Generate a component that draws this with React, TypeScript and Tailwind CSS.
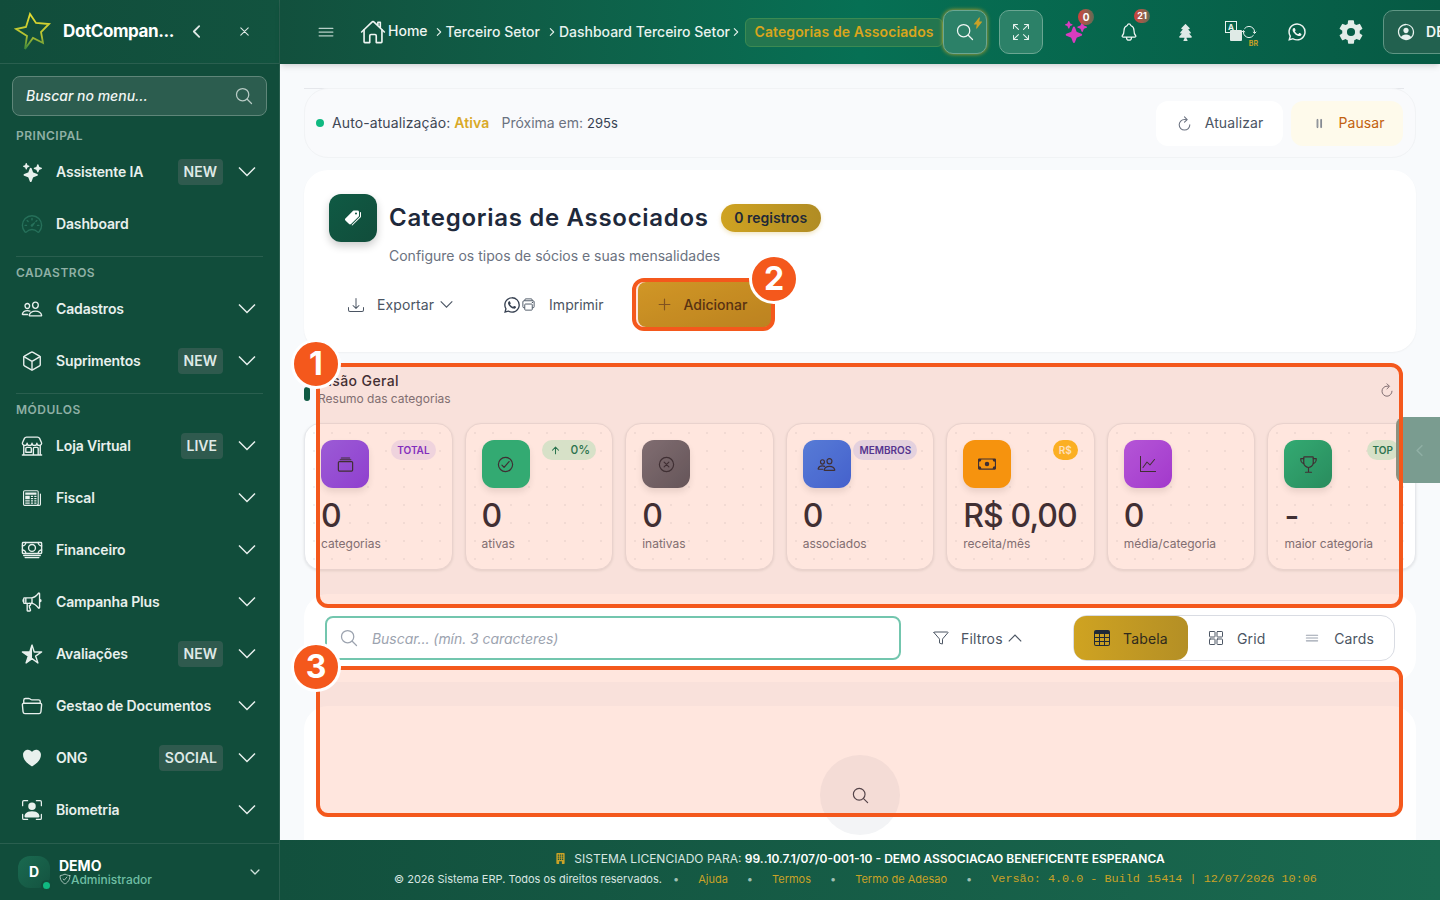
import React from "react";
import {
  IoAddOutline, IoAlbumsOutline, IoArrowUpOutline, IoCashOutline, IoCheckmarkCircleOutline,
  IoChevronBackOutline, IoChevronDownOutline, IoChevronForwardOutline,
  IoCloseCircleOutline, IoCloseOutline, IoCubeOutline, IoFolderOpenOutline,
  IoFunnelOutline, IoGridOutline, IoHeart, IoHomeOutline, IoLogoWhatsapp, IoMegaphoneOutline,
  IoMenuOutline, IoNotificationsOutline, IoPauseOutline, IoPeopleOutline, IoPersonCircleOutline,
  IoPrintOutline, IoRefreshOutline, IoReorderThreeOutline, IoSearchOutline, IoSettingsSharp,
  IoShieldCheckmarkOutline, IoSparkles, IoSpeedometerOutline, IoStarHalf, IoStorefrontOutline,
  IoTrophyOutline, IoFlash, IoPricetags, IoSync,
} from "react-icons/io5";
import { BsBuildingFill, BsCash, BsDownload, BsGraphUp, BsPersonBoundingBox, BsTable, BsNewspaper, BsArrowsFullscreen } from "react-icons/bs";
import { FaTree } from "react-icons/fa";

const font = "font-['Inter',sans-serif]";

function Chev({ w = 18, up = false, cls = "" }: { w?: number; up?: boolean; cls?: string }) {
  const h = w * 0.56;
  return (
    <svg width={w} height={h} viewBox="0 0 18 10" fill="none" stroke="currentColor" strokeWidth={1.5} className={cls}>
      <polyline points={up ? "1,9.5 9,1.5 17,9.5" : "1,0.5 9,8.5 17,0.5"} />
    </svg>
  );
}

type NavProps = { icon: React.ReactNode; label: string; badge?: string };

function NavItem({ icon, label, badge }: NavProps) {
  return (
    <div className="h-[52px] flex items-center pl-[21px] pr-[23px] text-[#e8f0ed]">
      <span className="w-[22px] flex justify-center text-[22px]">{icon}</span>
      <span className="ml-[13px] flex-1 text-sm font-semibold tracking-[-0.15px]">{label}</span>
      {badge && <span className="h-[26px] px-[6px] flex items-center rounded bg-[#2f5a4e] text-sm font-semibold text-[#dfe9e6]">{badge}</span>}
      {label !== "Dashboard" && <Chev cls="ml-[15px]" />}
    </div>
  );
}

function SectionLabel({ text }: { text: string }) {
  return <div className="h-[26px] pt-[8px] px-4 text-xs leading-4 font-semibold tracking-[0.5px] text-[#8fb0a5]">{text}</div>;
}

function Sidebar() {
  return (
    <aside className="w-[280px] h-full shrink-0 flex flex-col bg-[#114d3b] border-r border-[#2a5f4f]">
      <div className="h-16 shrink-0 flex items-center pl-[14px] border-b border-[#2a5f4f] bg-gradient-to-r from-[#114d3b] to-[#12533f]">
        <svg width="38" height="40" viewBox="0 0 38 40" className="shrink-0">
          <defs>
            <linearGradient id="logoStar" x1="0.5" y1="0" x2="0.4" y2="1">
              <stop offset="0" stopColor="#e6dc30" />
              <stop offset="0.6" stopColor="#b6c232" />
              <stop offset="1" stopColor="#3f8a3a" />
            </linearGradient>
          </defs>
          <path d="M16 2l6 9 13 1-8 8 2 11-10-5-8 11 2-13L2 17l10-2z" fill="none" stroke="url(#logoStar)" strokeWidth="1.8" />
        </svg>
        <span className="ml-[11px] w-[111px] whitespace-nowrap text-[17px] font-bold tracking-[-0.4px] text-white">DotCompan...</span>
        <IoChevronBackOutline className="ml-[13px] text-[19px] text-[#dfe9e6]" />
        <IoCloseOutline className="ml-[30px] text-[17px] text-[#dfe9e6]" />
      </div>
      <div className="mx-3 mt-3 h-10 shrink-0 flex items-center justify-between pl-[13px] pr-[12px] rounded-lg bg-[#2c5d4f] border border-[#5f8679]">
        <span className="text-sm italic font-medium text-[#f0f5f3]">Buscar no menu...</span>
        <IoSearchOutline className="text-[20px] text-[#b8cbc5]" />
      </div>
      <nav className="mt-1 flex-1 min-h-0 overflow-hidden">
        <SectionLabel text="PRINCIPAL" />
        <NavItem icon={<IoSparkles className="text-[19px]" />} label="Assistente IA" badge="NEW" />
        <NavItem icon={<IoSpeedometerOutline className="text-[#26705a]" />} label="Dashboard" />
        <div className="mx-4 mt-[6px] h-px bg-[#2a5f4f]" />
        <SectionLabel text="CADASTROS" />
        <NavItem icon={<IoPeopleOutline />} label="Cadastros" />
        <NavItem icon={<IoCubeOutline />} label="Suprimentos" badge="NEW" />
        <div className="mx-4 mt-[6px] h-px bg-[#2a5f4f]" />
        <SectionLabel text="MÓDULOS" />
        <NavItem icon={<IoStorefrontOutline />} label="Loja Virtual" badge="LIVE" />
        <NavItem icon={<BsNewspaper className="text-[18px]" />} label="Fiscal" />
        <NavItem icon={<IoCashOutline />} label="Financeiro" />
        <NavItem icon={<IoMegaphoneOutline />} label="Campanha Plus" />
        <NavItem icon={<IoStarHalf />} label="Avaliações" badge="NEW" />
        <NavItem icon={<IoFolderOpenOutline />} label="Gestao de Documentos" />
        <NavItem icon={<IoHeart />} label="ONG" badge="SOCIAL" />
        <NavItem icon={<BsPersonBoundingBox className="text-[20px]" />} label="Biometria" />
      </nav>
      <div className="h-[57px] shrink-0 flex items-center pl-[18px] pr-[17px] border-t border-[#2a5f4f]">
        <div className="relative w-8 h-8 rounded-xl bg-gradient-to-br from-[#1a6a50] to-[#145340] flex items-center justify-center text-sm font-bold text-white">
          D
          <span className="absolute -right-[2px] -bottom-[3px] w-[11px] h-[11px] rounded-full bg-[#10b981] border-2 border-[#114d3b]" />
        </div>
        <div className="ml-[9px] flex-1 leading-none">
          <div className="text-sm font-bold leading-[14px] text-white">DEMO</div>
          <div className="flex items-center text-xs font-medium leading-[13px] text-[#6fbfa4]">
            <IoShieldCheckmarkOutline className="text-[12px] text-[#cfe2dc]" />
            Administrador
          </div>
        </div>
        <IoChevronDownOutline className="text-[14px] text-[#cfe2dc]" />
      </div>
    </aside>
  );
}

function Crumb({ text }: { text: string }) {
  return (
    <>
      <IoChevronForwardOutline className="text-[12px] text-[#e2eee9] shrink-0" />
      <span className="whitespace-nowrap text-sm font-medium text-[#e8f3ef]">{text}</span>
    </>
  );
}

function Topbar() {
  return (
    <header className="h-16 shrink-0 flex items-center overflow-hidden pl-[36px] bg-gradient-to-r from-[#12503d] via-[#067054] to-[#075a44] shadow-md">
      <IoMenuOutline className="text-[20px] text-[#b7cfc7] shrink-0" />
      <IoHomeOutline className="ml-[24px] text-[26px] text-[#eef5f2] shrink-0" />
      <span className="ml-[2px] -mt-[3px] text-sm font-medium text-[#eef5f2]">Home</span>
      <span className="ml-[5px] shrink-0 flex items-center gap-[1px]"><Crumb text="Terceiro Setor" /></span>
      <span className="ml-[6px] shrink-0 flex items-center gap-[1px]"><Crumb text="Dashboard Terceiro Setor" /></span>
      <IoChevronForwardOutline className="text-[12px] text-[#e2eee9] shrink-0" />
      <span className="ml-[3px] w-[198px] h-[29px] shrink-0 flex items-center justify-center rounded-md border border-[#3c8a52] bg-[#23764f] whitespace-nowrap text-sm font-semibold tracking-[0.1px] text-[#d9a51c]">Categorias de Associados</span>
      <div className="relative w-11 h-11 shrink-0 flex items-center justify-center rounded-[10px] border border-[#6aa692] bg-[#2c8168] shadow-[0_0_4px_#c9a227]">
        <IoSearchOutline className="text-[20px] text-[#f0f6f4]" />
        <IoFlash className="absolute right-[2px] top-[6px] text-[12px] text-[#c9a227]" />
      </div>
      <div className="ml-3 w-11 h-11 shrink-0 flex items-center justify-center rounded-[10px] border border-[#6aa692] bg-[#2c8168]">
        <BsArrowsFullscreen className="text-[16px] text-[#e8f3ef]" />
      </div>
      <div className="relative ml-[22px] w-[22px] h-[22px] shrink-0">
        <IoSparkles className="text-[22px] text-[#d83cc0]" />
        <span className="absolute -right-[7px] -top-[12px] w-4 h-4 rounded-full bg-gradient-to-r from-[#d33c3c] to-[#5c6a55] flex items-center justify-center text-[10px] font-bold text-white">0</span>
      </div>
      <div className="relative ml-[32px] shrink-0">
        <IoNotificationsOutline className="text-[20px] text-[#f0f6f4]" />
        <span className="absolute -right-[11px] -top-[13px] w-4 h-[14px] rounded-full bg-gradient-to-r from-[#d33c3c] to-[#5c6a55] flex items-center justify-center text-[9px] font-bold text-white">21</span>
      </div>
      <FaTree className="ml-[38px] text-[17px] text-[#dfeae6] shrink-0" />
      <div className="relative ml-[31px] w-[32px] h-6 shrink-0">
        <span className="absolute left-0 top-[1px] w-[12px] h-[12px] border border-[#e8f3ef] text-[8px] leading-[10px] text-center font-bold text-[#e8f3ef]">A</span>
        <span className="absolute left-[5px] top-[10px] w-[12px] h-[11px] rounded-[1px] bg-[#dfeae6]" />
        <IoSync className="absolute right-0 top-[4px] text-[16px] text-[#e8f3ef]" />
        <span className="absolute -right-[1px] -bottom-[5px] text-[7px] font-bold text-[#c9a227]">BR</span>
      </div>
      <IoLogoWhatsapp className="ml-[30px] text-[20px] text-[#eef5f2] shrink-0" />
      <IoSettingsSharp className="ml-[31px] text-[26px] text-[#e2ece8] shrink-0" />
      <div className="ml-[19px] h-11 w-[100px] shrink-0 flex items-center pl-[12px] rounded-[10px] border border-[#5f9684] bg-[#22614f]">
        <IoPersonCircleOutline className="text-[20px] text-[#e8f3ef]" />
        <span className="ml-[10px] text-sm font-semibold text-[#f0f6f4]">DEMO</span>
      </div>
    </header>
  );
}

function AutoBar() {
  return (
    <div className="shrink-0">
      <div className="mr-3 h-px bg-[#e5e7eb]" />
      <div className="-mt-px h-[70px] flex items-center pl-[11px] pr-3 rounded-3xl border border-[#f1f3f5] bg-[#f9fafc]">
        <span className="w-2 h-2 rounded-full bg-[#10b981]" />
        <span className="ml-2 text-sm tracking-[0.1px] text-[#3f4754]">Auto-atualização: <b className="font-semibold text-[#d9a928]">Ativa</b></span>
        <span className="ml-3 text-sm text-[#6b7280]">Próxima em: <span className="text-[#374151] text-[13px]">295s</span></span>
        <div className="ml-auto flex gap-2">
          <div className="h-[45px] w-[127px] flex items-center justify-center gap-[12px] rounded-xl bg-white text-sm tracking-[0.1px] text-[#4b5563]">
            <IoRefreshOutline className="text-[17px] text-[#6b7280]" />Atualizar
          </div>
          <div className="h-[45px] w-[112px] pl-[4px] flex items-center justify-center gap-[12px] rounded-xl bg-[#fefaeb] text-sm tracking-[0.1px] text-[#c2610f]">
            <IoPauseOutline className="text-[13px] text-[#6b7280]" />Pausar
          </div>
        </div>
      </div>
    </div>
  );
}

function TitleCard() {
  return (
    <div className="mt-3 h-[182px] shrink-0 rounded-3xl bg-white shadow-[0_1px_2px_#0000000a] pl-[25px] pt-[24px]">
      <div className="flex">
        <div className="w-12 h-12 rounded-xl bg-gradient-to-br from-[#0f5a44] to-[#114d3b] shadow-[0_4px_8px_#00000033] flex items-center justify-center">
          <IoPricetags className="text-[16px] text-white" />
        </div>
        <div className="ml-3">
          <div className="flex items-center h-12">
            <h1 className="text-2xl font-semibold tracking-[0.7px] text-[#1e293b]">Categorias de Associados</h1>
            <span className="ml-3 w-[100px] h-7 flex items-center justify-center rounded-full bg-gradient-to-r from-[#cfa321] to-[#b08c24] text-sm font-semibold text-[#1f2937] shadow-[0_2px_4px_#c9a22744]">0 registros</span>
          </div>
          <p className="mt-[4px] text-sm text-[#6b7280]">Configure os tipos de sócios e suas mensalidades</p>
        </div>
      </div>
      <div className="mt-[16px] flex items-center text-sm text-[#4b5563]">
        <span className="ml-[19px] flex items-center">
          <BsDownload className="text-[16px]" />
          <span className="ml-[13px] tracking-[0.1px]">Exportar</span>
          <Chev w={13} cls="ml-[6px]" />
        </span>
        <span className="ml-[50px] flex items-center">
          <IoLogoWhatsapp className="text-[18px] text-[#374151]" />
          <IoPrintOutline className="text-[15px]" />
          <span className="ml-[13px]">Imprimir</span>
        </span>
        <span className="ml-[34px] w-[135px] h-[45px] flex items-center pl-[17px] rounded-lg bg-gradient-to-br from-[#c9a227] to-[#b08a20] font-medium text-[#3b2c10]">
          <IoAddOutline className="text-[19px] text-[#6b5220]" />
          <span className="ml-[10px]">Adicionar</span>
        </span>
      </div>
    </div>
  );
}

type StatProps = { icon: React.ReactNode; bg: string; pill?: React.ReactNode; pillCls?: string; value: string; label: string };

function StatCard({ icon, bg, pill, pillCls, value, label }: StatProps) {
  return (
    <div className="h-[147px] rounded-2xl border border-[#e6e8ec] bg-white bg-[radial-gradient(#f0f1f3_1px,transparent_1px)] bg-[size:18px_18px] shadow-[0_1px_3px_#0000001a] pl-[16px] pr-[16px] pt-[16px]">
      <div className="flex items-start justify-between">
        <div className={`w-12 h-12 rounded-xl flex items-center justify-center text-[19px] text-[#1f2937] shadow-[0_4px_6px_#0000001a] ${bg}`}>{icon}</div>
        {pill && <span className={`h-5 px-[6px] flex items-center rounded-full text-[10px] font-semibold whitespace-nowrap ${pillCls}`}>{pill}</span>}
      </div>
      <div className="mt-[8px] whitespace-nowrap text-[32px] leading-[40px] font-medium tracking-[-0.9px] text-[#1f2937]">{value}</div>
      <div className="text-xs leading-4 text-[#6b7280]">{label}</div>
    </div>
  );
}

function Stats() {
  return (
    <section className="mt-[21px] shrink-0">
      <div className="flex items-center h-[33px]">
        <span className="w-[6px] h-[14px] mt-[9px] rounded-full bg-[#0f5a44]" />
        <div className="ml-2">
          <div className="mb-[2px] text-sm font-medium leading-[16px] tracking-[0.4px] text-[#1f2937]">Visão Geral</div>
          <div className="text-xs leading-4 text-[#6b7280]">Resumo das categorias</div>
        </div>
        <IoRefreshOutline className="ml-auto mr-[21px] text-[16px] text-[#6b7280]" />
      </div>
      <div className="mt-[17px] grid grid-cols-7 gap-3">
        <StatCard icon={<IoAlbumsOutline />} bg="bg-gradient-to-br from-[#8b5cf6] to-[#7c3aed]" pill="TOTAL" pillCls="bg-[#ede9fe] text-[#6d28d9]" value="0" label="categorias" />
        <StatCard icon={<IoCheckmarkCircleOutline />} bg="bg-[#10b981]" pill={<><IoArrowUpOutline className="mx-[2px] text-[11px]" /><span className="ml-[7px] text-[12px] font-medium">0%</span></>} pillCls="bg-[#d1fae5] text-[#047857]" value="0" label="ativas" />
        <StatCard icon={<IoCloseCircleOutline />} bg="bg-gradient-to-br from-[#6b7280] to-[#4b5563]" value="0" label="inativas" />
        <StatCard icon={<IoPeopleOutline />} bg="bg-gradient-to-br from-[#3b82f6] to-[#2563eb]" pill="MEMBROS" pillCls="bg-[#e0e7ff] text-[#3730a3]" value="0" label="associados" />
        <StatCard icon={<BsCash className="text-[18px]" />} bg="bg-[#f59e0b]" pill="R$" pillCls="bg-[#fbbf24] text-[#fff7d6]" value="R$ 0,00" label="receita/mês" />
        <StatCard icon={<BsGraphUp className="text-[16px]" />} bg="bg-gradient-to-br from-[#a855f7] to-[#9333ea]" value="0" label="média/categoria" />
        <StatCard icon={<IoTrophyOutline />} bg="bg-gradient-to-br from-[#10b981] to-[#059669]" pill="TOP" pillCls="bg-[#d1fae5] text-[#047857]" value="-" label="maior categoria" />
      </div>
    </section>
  );
}

function FilterCard() {
  return (
    <div className="mt-[24px] h-[88px] shrink-0 flex items-center pl-[21px] pr-[21px] rounded-3xl bg-white [&_span]:pt-[2px]">
      <div className="w-[576px] h-11 flex items-center pl-[12px] rounded-lg border-2 border-[#73c6ae] bg-white">
        <IoSearchOutline className="text-[20px] text-[#9ca3af]" />
        <span className="ml-[13px] text-sm italic tracking-[-0.05px] text-[#9ca3af]">Buscar... (mín. 3 caracteres)</span>
      </div>
      <div className="ml-[32px] flex items-center text-sm tracking-[0.15px] text-[#4b5563]">
        <IoFunnelOutline className="text-[16px]" />
        <span className="ml-[12px]">Filtros</span>
        <Chev w={14} up cls="ml-[5px]" />
      </div>
      <div className="ml-auto w-[322px] h-[46px] flex items-center rounded-[14px] border border-[#d9dce3] text-sm tracking-[0.15px] text-[#4b5563]">
        <div className="w-[114px] h-full flex items-center pl-5 rounded-[12px] bg-gradient-to-r from-[#cfa321] to-[#b48f25] text-[#2f2a1c]">
          <BsTable className="text-[16px] text-[#1f2937]" />
          <span className="ml-[13px]">Tabela</span>
        </div>
        <IoGridOutline className="ml-5 text-[16px]" />
        <span className="ml-[13px]">Grid</span>
        <IoReorderThreeOutline className="ml-auto text-[18px] text-[#9ca3af]" />
        <span className="ml-[13px] mr-[20px]">Cards</span>
      </div>
    </div>
  );
}

function EmptyCard() {
  return (
    <div className="mt-[24px] flex-1 rounded-t-3xl bg-white flex justify-center pt-[49px]">
      <div className="w-20 h-20 rounded-full bg-[#f3f4f6] flex items-center justify-center">
        <IoSearchOutline className="text-[19px] text-[#374151]" />
      </div>
    </div>
  );
}

function Footer() {
  return (
    <footer className="h-[60px] shrink-0 pb-[3px] flex flex-col items-center justify-center gap-[4px] bg-gradient-to-r from-[#12503d] to-[#1a6a50] text-xs text-[#d8e6e1]">
      <div className="flex items-center leading-[17px]">
        <BsBuildingFill className="mr-2 text-[11px] text-[#c9a227]" />
        SISTEMA LICENCIADO PARA:&nbsp;<b className="font-semibold text-white">99..10.7.1/07/0-001-10 - DEMO ASSOCIACAO BENEFICENTE ESPERANCA</b>
      </div>
      <div className="mr-[9px] flex items-center leading-[17px] text-[11px]">
        <span>© 2026 Sistema ERP. Todos os direitos reservados.</span>
        <span className="ml-[11px] mr-[19px] text-[#9fc0b4]">•</span>
        <span className="text-[#c9a227]">Ajuda</span>
        <span className="mx-[19px] text-[#9fc0b4]">•</span>
        <span className="text-[#c9a227]">Termos</span>
        <span className="mx-[19px] text-[#9fc0b4]">•</span>
        <span className="text-[#c9a227]">Termo de Adesao</span>
        <span className="mx-[19px] text-[#9fc0b4]">•</span>
        <span className="font-['Liberation_Mono',monospace] text-[11.8px] text-[#c9a227]">Versão: 4.0.0 - Build 15414 | 12/07/2026 10:06</span>
      </div>
    </footer>
  );
}

function Step({ n, cls }: { n: string; cls: string }) {
  return <span className={`absolute z-30 w-[50px] h-[50px] rounded-full bg-[#f4581c] border-[3px] border-white flex items-center justify-center text-[32px] leading-none font-bold text-white ${cls}`}>{n}</span>;
}

export default function App() {
  return (
    <div className={`relative w-[1440px] h-screen flex overflow-hidden bg-[#f8fafc] ${font}`}>
      <Sidebar />
      <div className="flex-1 min-w-0 flex flex-col">
        <Topbar />
        <main className="flex-1 min-h-0 flex flex-col overflow-hidden px-6 pt-6">
          <AutoBar />
          <TitleCard />
          <Stats />
          <FilterCard />
          <EmptyCard />
        </main>
        <Footer />
      </div>

      {/* side handle + guide overlays */}
      <div className="absolute right-0 top-[417px] w-[44px] h-[66px] rounded-l-lg bg-[#7a9c90] flex items-center pl-[15px]">
        <IoChevronBackOutline className="text-[17px] text-[#8fafa4]" />
      </div>
      <div className="absolute z-20 left-[316px] top-[363px] w-[1087px] h-[245px] rounded-xl border-[4px] border-[#f4581c] bg-[#ff572226]" />
      <div className="absolute z-20 left-[632px] top-[278px] w-[143px] h-[53px] rounded-xl border-[4px] border-[#f4581c] bg-[#ff572226]" />
      <div className="absolute z-20 left-[316px] top-[666px] w-[1087px] h-[151px] rounded-xl border-[4px] border-[#f4581c] bg-[#ff572226]" />
      <Step n="1" cls="left-[291px] top-[339px]" />
      <Step n="2" cls="left-[749px] top-[254px]" />
      <Step n="3" cls="left-[291px] top-[642px]" />
    </div>
  );
}
